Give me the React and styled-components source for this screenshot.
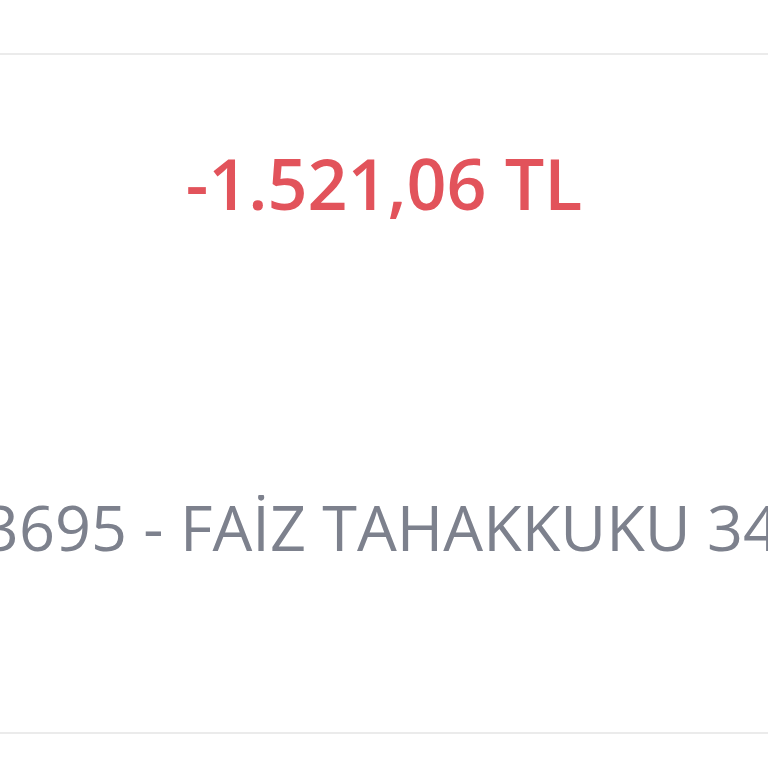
import React from "react";
import styled, { createGlobalStyle } from "styled-components";

const Global = createGlobalStyle`
  html, body { margin: 0; padding: 0; background: #ffffff; }
  body { font-family: "Open Sans", "Noto Sans", sans-serif; overflow: hidden; }
`;

const Page = styled.div`
  width: 768px;
  height: 768px;
  padding-top: 53px;
  box-sizing: border-box;
  overflow: hidden;
`;

const Card = styled.div`
  border-top: 2px solid #ebebeb;
  border-bottom: 2px solid #ebebeb;
  height: 681px;
  box-sizing: border-box;
  display: flex;
  flex-direction: column;
  padding-top: 93px;
`;

const Amount = styled.div`
  color: #e2535b;
  font-size: 70px;
  font-weight: 600;
  line-height: 1;
  text-align: center;
`;

const DescRow = styled.div`
  margin-top: 277px;
  display: flex;
  justify-content: center;
  overflow: hidden;
`;

const Desc = styled.span`
  color: #7d818d;
  font-size: 63px;
  line-height: 1;
  white-space: nowrap;
  flex: none;
  margin-left: -6px;
`;

export default function App() {
  return (
    <>
      <Global />
      <Page>
        <Card>
          <Amount>-1.521,06 TL</Amount>
          <DescRow>
            <Desc>13695 - FAİZ TAHAKKUKU 345</Desc>
          </DescRow>
        </Card>
      </Page>
    </>
  );
}
